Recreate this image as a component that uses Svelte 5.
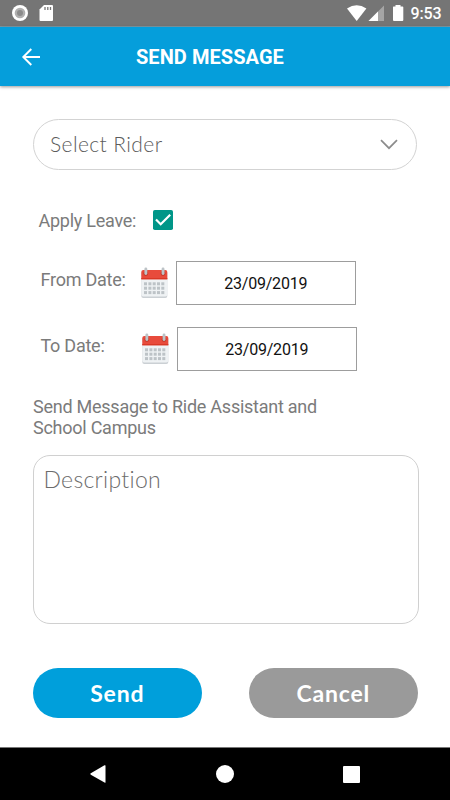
<script>
  let leave = $state(true);
  const dates = [
    { label: 'From Date:', value: '23/09/2019' },
    { label: 'To Date:', value: '23/09/2019' }
  ];
  const dotRows = [18, 22.4, 26.8];
  const dotCols = [4.4, 8.8, 13.1, 17.4, 21.7];
</script>

<div class="screen">
  <div class="status">
    <svg class="notif" width="44" height="20" viewBox="0 0 44 20">
      <circle cx="8" cy="10" r="8" fill="#fff" />
      <circle cx="8" cy="10" r="5.3" fill="#b0b0b0" />
      <circle cx="8" cy="10" r="3" fill="#8b8b8b" />
      <path d="M32 2h8q1 0 1 1v14q0 1-1 1H28.500q-1 0-1-1V6.500z" fill="#fff" />
      <path d="M33 4v3M35.800 4v3M38.500 4v3" stroke="#777" stroke-width="1.300" />
    </svg>
    <svg class="system" width="58" height="20" viewBox="0 0 58 20">
      <path d="M0 5.500Q9.700-1.200 19.400 5.500L9.700 18z" fill="#fff" />
      <path d="M37 2.500V18H21.500z" fill="#a5a5a5" />
      <path d="M31 8.500V18h-9.500z" fill="#fff" />
      <path d="M46.500 3.500h2V2h5v1.500h2q.8 0 .8.800V17q0 1-1 1h-8.300q-1 0-1-1V4.300q0-.8.500-.8z" fill="#fff" />
    </svg>
    <span class="clock">9:53</span>
  </div>

  <header>
    <svg class="back" width="20" height="20" viewBox="0 0 20 20" fill="none" stroke="#fff" stroke-width="1.900">
      <path d="M19 10H2.500M10.300 2L2.300 10l8 8" />
    </svg>
    <h1>SEND MESSAGE</h1>
  </header>

  <main>
    <div class="select">
      <span>Select Rider</span>
      <svg width="18" height="11" viewBox="0 0 18 11" fill="none" stroke="#8c8c8c" stroke-width="1.700">
        <path d="M1 1.200l8 8 8-8" />
      </svg>
    </div>

    <label class="leave">
      <span>Apply Leave:</span>
      <input type="checkbox" bind:checked={leave} />
      <svg width="20" height="20" viewBox="0 0 20 20">
        <rect width="20" height="20" rx="1.800" fill={leave ? '#009688' : '#fff'} />
        {#if leave}
          <path d="M3 9.500l4.700 4.700L17.200 4.700" fill="none" stroke="#fff" stroke-width="2.200" />
        {/if}
      </svg>
    </label>

    {#each dates as date, i}
      <div class="date" class:second={i === 1}>
        <span class="name">{date.label}</span>
        <svg class="calendar" width="27" height="32" viewBox="0 0 27 32">
          <rect x="0.300" y="4" width="26" height="27" rx="2" fill="#cbd0d4" />
          <path d="M.3 9h26v18.500q0 2-2 2h-22q-2 0-2-2z" fill="#eff2f4" />
          <path d="M.3 12.300V5q0-2 2-2h22q2 0 2 2v7.300z" fill="#e84b3c" />
          <path d="M.3 11h26v1.300h-26z" fill="#d93826" />
          <circle cx="4.800" cy="6.500" r="2.400" fill="#c33a2c" />
          <circle cx="22" cy="6.500" r="2.400" fill="#c33a2c" />
          <rect x="3.400" y="0.500" width="2.900" height="7.500" rx="1.400" fill="#bdc3c7" />
          <rect x="20.600" y="0.500" width="2.900" height="7.500" rx="1.400" fill="#bdc3c7" />
          {#each dotRows as y}
            {#each dotCols as x}
              <rect x={x - 1.4} y={y - 2.700} width="3" height="3" fill="#bdc3c7" />
            {/each}
          {/each}
        </svg>
        <div class="value">{date.value}</div>
      </div>
    {/each}

    <p>Send Message to Ride Assistant and<br />School Campus</p>
    <div class="description">Description</div>

    <div class="actions">
      <button class="send">Send</button>
      <button class="cancel">Cancel</button>
    </div>
  </main>

  <nav>
    <svg width="17" height="18" viewBox="0 0 17 18"><path d="M.8 8.300L14.500.3q1-.4 1 .5v16.400q0 .8-1 .4L.8 9.700q-.9-.7 0-1.400z" fill="#fff" /></svg>
    <svg width="18" height="18" viewBox="0 0 18 18"><circle cx="9" cy="9" r="9" fill="#fff" /></svg>
    <svg width="17" height="17" viewBox="0 0 17 17"><rect width="17" height="17" rx="1" fill="#fff" /></svg>
  </nav>
</div>

<style>
  :global(body) { margin: 0; }
  .screen {
    width: 450px;
    height: 800px;
    display: flex;
    flex-direction: column;
    overflow: hidden;
    background: #fff;
    font-family: Roboto, 'Liberation Sans', sans-serif;
    color: #7b7b7b;
  }
  svg { display: block; flex: none; }
  .status {
    box-sizing: border-box;
    height: 27px;
    flex: none;
    display: flex;
    padding: 3px 0 0 12px;
    background: #757575;
    border-bottom: 1px solid #7d9aa6;
    color: #fff;
  }
  .system { margin-left: 291px; }
  .clock { margin-left: 5.500px; font-size: 16px; line-height: 22px; font-weight: 500; letter-spacing: -0.1px; }
  header {
    height: 59px;
    flex: none;
    display: flex;
    align-items: center;
    background: #059edb;
    box-shadow: 0 1px 3px rgba(0, 0, 0, 0.4);
  }
  .back { margin-left: 21px; }
  h1 { margin: 0 0 0 95px; font-size: 20px; line-height: 24px; font-weight: 700; color: #fff; letter-spacing: 0.06px; white-space: nowrap; }
  main { flex: 1; padding: 33px 0 0 33px; }
  .select {
    box-sizing: border-box;
    width: 384px;
    height: 51px;
    padding: 0 18px 2px 16px;
    border: 1px solid #d3d3d3;
    border-radius: 26px;
    display: flex;
    align-items: center;
    justify-content: space-between;
    font: 300 21px/26px Lato, sans-serif;
    letter-spacing: 0.4px;
    color: #5c5c5c;
  }
  .select svg { margin-top: 2px; }
  .leave { display: flex; align-items: center; height: 24px; margin: 38px 0 0 5.500px; font-size: 18px; letter-spacing: -0.25px; }
  .leave span { width: 114.500px; }
  .leave input { appearance: none; width: 0; height: 0; margin: 0; }
  .leave svg { margin-top: -1px; }
  .date { display: flex; margin: 29px 0 0 7.500px; height: 44px; }
  .date.second { margin-top: 22px; }
  .name { width: 100.500px; font-size: 18px; line-height: 37px; letter-spacing: -0.25px; }
  .calendar { margin-top: 6px; }
  .second .calendar { margin-left: 1px; }
  .value {
    box-sizing: border-box;
    width: 179.500px;
    margin-left: 8px;
    border: 1px solid #9d9d9d;
    color: #111;
    font-size: 16px;
    line-height: 44px;
    letter-spacing: -0.22px;
    text-align: center;
  }
  p { margin: 26px 0 0; font-size: 18px; line-height: 20.500px; letter-spacing: -0.25px; white-space: nowrap; }
  .description {
    box-sizing: border-box;
    width: 386px;
    height: 169px;
    margin-top: 17px;
    padding: 9px 9.500px;
    border: 1px solid #d0d0d0;
    border-radius: 17px;
    font: 300 23px/28px Lato, sans-serif;
    letter-spacing: 0.3px;
    font-variant-ligatures: none;
    color: #6c6c6c;
  }
  .actions { display: flex; gap: 47.500px; margin-top: 43.500px; }
  button {
    width: 168.500px;
    height: 50.500px;
    padding: 0;
    border: 0;
    border-radius: 26px;
    color: #fff;
    font: 700 23px/28px Lato, sans-serif;
    letter-spacing: 0.8px;
  }
  .send { background: #009fdb; }
  .cancel { background: #9a9a9a; }
  nav {
    box-sizing: border-box;
    height: 53px;
    flex: none;
    display: flex;
    align-items: center;
    justify-content: space-between;
    padding: 0 90px;
    border-top: 1px solid #777;
    background: #000;
  }
</style>
